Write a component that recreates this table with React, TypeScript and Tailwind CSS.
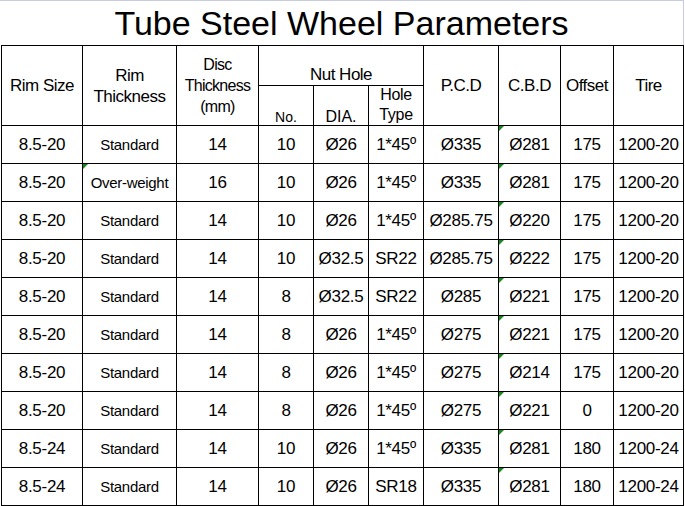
import React from "react";

type Row = {
  size: string;
  rim: string;
  disc: string;
  no: string;
  dia: string;
  type: string;
  pcd: string;
  cbd: string;
  offset: string;
  tire: string;
};

const rows: Row[] = [
  { size: "8.5-20", rim: "Standard", disc: "14", no: "10", dia: "Ø26", type: "1*45º", pcd: "Ø335", cbd: "Ø281", offset: "175", tire: "1200-20" },
  { size: "8.5-20", rim: "Over-weight", disc: "16", no: "10", dia: "Ø26", type: "1*45º", pcd: "Ø335", cbd: "Ø281", offset: "175", tire: "1200-20" },
  { size: "8.5-20", rim: "Standard", disc: "14", no: "10", dia: "Ø26", type: "1*45º", pcd: "Ø285.75", cbd: "Ø220", offset: "175", tire: "1200-20" },
  { size: "8.5-20", rim: "Standard", disc: "14", no: "10", dia: "Ø32.5", type: "SR22", pcd: "Ø285.75", cbd: "Ø222", offset: "175", tire: "1200-20" },
  { size: "8.5-20", rim: "Standard", disc: "14", no: "8", dia: "Ø32.5", type: "SR22", pcd: "Ø285", cbd: "Ø221", offset: "175", tire: "1200-20" },
  { size: "8.5-20", rim: "Standard", disc: "14", no: "8", dia: "Ø26", type: "1*45º", pcd: "Ø275", cbd: "Ø221", offset: "175", tire: "1200-20" },
  { size: "8.5-20", rim: "Standard", disc: "14", no: "8", dia: "Ø26", type: "1*45º", pcd: "Ø275", cbd: "Ø214", offset: "175", tire: "1200-20" },
  { size: "8.5-20", rim: "Standard", disc: "14", no: "8", dia: "Ø26", type: "1*45º", pcd: "Ø275", cbd: "Ø221", offset: "0", tire: "1200-20" },
  { size: "8.5-24", rim: "Standard", disc: "14", no: "10", dia: "Ø26", type: "1*45º", pcd: "Ø335", cbd: "Ø281", offset: "180", tire: "1200-24" },
  { size: "8.5-24", rim: "Standard", disc: "14", no: "10", dia: "Ø26", type: "SR18", pcd: "Ø335", cbd: "Ø281", offset: "180", tire: "1200-24" },
];

const cell = "relative flex items-center justify-center border-r border-b border-black text-center";
const num = "text-[17px] tracking-[-0.3px] leading-none";
const head = "text-[17px] tracking-[-0.5px] leading-[21px]";

function Flag() {
  return (
    <span className="absolute top-0 left-0 h-0 w-0 border-t-[5px] border-r-[5px] border-t-[#12891a] border-r-transparent" />
  );
}

export default function App() {
  return (
    <div className="w-[685px] h-[506px] bg-white text-black font-['Liberation_Sans',Arial,sans-serif] overflow-hidden">
      <div className="w-[684px] h-[45px] border-t border-r border-[#c6cce0] flex items-center justify-center">
        <span className="text-[34px] leading-none">Tube Steel Wheel Parameters</span>
      </div>
      <div className="ml-[1px] w-[683px] border-l border-t border-black grid grid-cols-[81px_94px_82px_55px_55px_55px_75px_62px_53px_70px] grid-rows-[40px_40px_repeat(10,38px)]">
        <div className={`${cell} row-span-2 ${head}`}>Rim Size</div>
        <div className={`${cell} row-span-2 ${head} flex-col`}>
          <span>Rim</span>
          <span>Thickness</span>
        </div>
        <div className={`${cell} row-span-2 flex-col text-[16px] tracking-[-0.7px] leading-[21px]`}>
          <span>Disc</span>
          <span>Thickness</span>
          <span>(mm)</span>
        </div>
        <div className={`${cell} col-span-3 items-end text-[17px] tracking-[-0.5px] leading-[20px]`}>
          <span>Nut Hole</span>
        </div>
        <div className={`${cell} row-span-2 ${head}`}>P.C.D</div>
        <div className={`${cell} row-span-2 ${head}`}>C.B.D</div>
        <div className={`${cell} row-span-2 ${head}`}>Offset</div>
        <div className={`${cell} row-span-2 ${head}`}>Tire</div>
        <div className={`${cell} items-end text-[14px] leading-[15px]`}>
          <span>No.</span>
        </div>
        <div className={`${cell} items-end text-[16px] leading-[17px]`}>
          <span>DIA.</span>
        </div>
        <div className={`${cell} flex-col justify-end text-[16px] tracking-[-0.3px] leading-[20px]`}>
          <span>Hole</span>
          <span>Type</span>
        </div>
        {rows.map((r, i) => (
          <React.Fragment key={i}>
            <div className={`${cell} ${num}`}>{r.size}</div>
            <div className={`${cell} text-[15px] tracking-[-0.3px] leading-none`}>
              {i === 1 && <Flag />}
              {r.rim}
            </div>
            <div className={`${cell} ${num}`}>{r.disc}</div>
            <div className={`${cell} ${num}`}>{r.no}</div>
            <div className={`${cell} ${num}`}>{r.dia}</div>
            <div className={`${cell} ${num}`}>{r.type}</div>
            <div className={`${cell} ${num}`}>{r.pcd}</div>
            <div className={`${cell} ${num}`}>
              <Flag />
              {r.cbd}
            </div>
            <div className={`${cell} ${num}`}>{r.offset}</div>
            <div className={`${cell} ${num}`}>{r.tire}</div>
          </React.Fragment>
        ))}
      </div>
    </div>
  );
}
